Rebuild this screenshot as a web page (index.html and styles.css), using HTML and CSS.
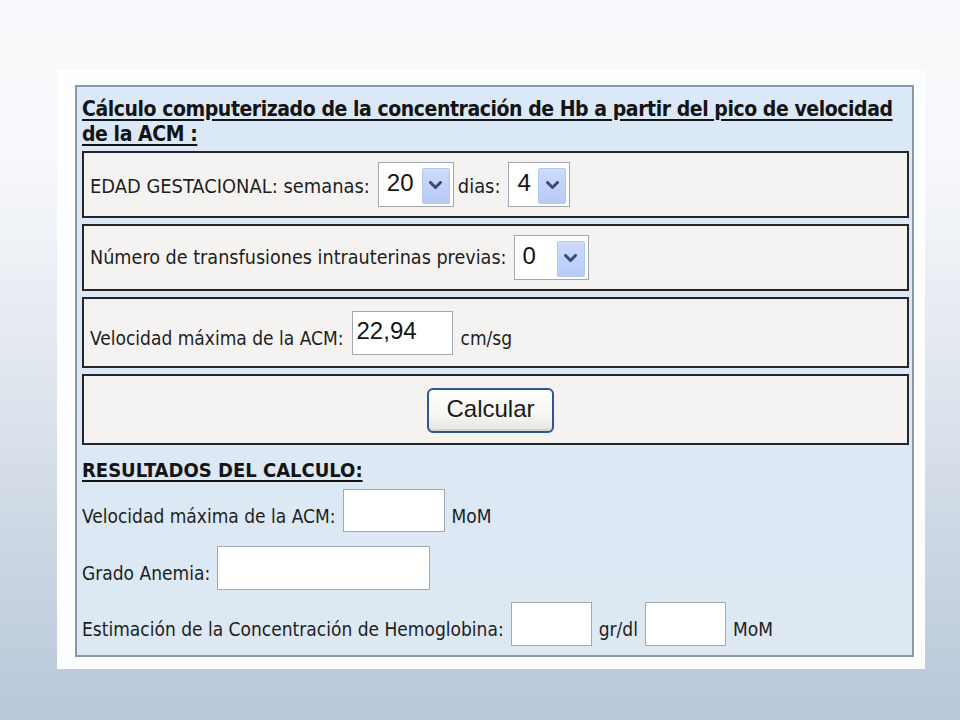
FILE: index.html
```html
<!DOCTYPE html>
<html lang="es">
<head>
<meta charset="utf-8">
<title>Cálculo Hb</title>
<link rel="stylesheet" href="styles.css">
</head>
<body>
<div class="slide">
  <div class="panel">
    <div class="title">Cálculo computerizado de la concentración de Hb a partir del pico de velocidad<br>de la ACM :</div>

    <div class="box box-short">
      <span class="lbl lbl-first">EDAD GESTACIONAL: semanas:</span>
      <div class="sel sel-sem"><span class="val">20</span><span class="arr"><svg width="13" height="9" viewBox="0 0 13 9"><polyline points="1.5,1.5 6.5,6.5 11.5,1.5" fill="none" stroke="#324d7e" stroke-width="3" stroke-linecap="round" stroke-linejoin="round"/></svg></span></div>
      <span class="lbl lbl-first lbl-dias">dias:</span>
      <div class="sel sel-dias"><span class="val">4</span><span class="arr"><svg width="13" height="9" viewBox="0 0 13 9"><polyline points="1.5,1.5 6.5,6.5 11.5,1.5" fill="none" stroke="#324d7e" stroke-width="3" stroke-linecap="round" stroke-linejoin="round"/></svg></span></div>
    </div>

    <div class="box box-short">
      <span class="lbl lbl-wide">Número de transfusiones intrauterinas previas:</span>
      <div class="sel sel-tr"><span class="val">0</span><span class="arr"><svg width="13" height="9" viewBox="0 0 13 9"><polyline points="1.5,1.5 6.5,6.5 11.5,1.5" fill="none" stroke="#324d7e" stroke-width="3" stroke-linecap="round" stroke-linejoin="round"/></svg></span></div>
    </div>

    <div class="box box-tall">
      <span class="lbl lbl-low">Velocidad máxima de la ACM:</span>
      <div class="field field-vel"><span class="val">22,94</span></div>
      <span class="lbl lbl-low">cm/sg</span>
    </div>

    <div class="box box-tall box-center">
      <div class="btn">Calcular</div>
    </div>

    <div class="results">
      <div class="res-title">RESULTADOS DEL CALCULO:</div>
      <div class="res-row res-row-1">
        <span class="lbl lbl-low">Velocidad máxima de la ACM:</span>
        <div class="out out-mom"></div>
        <span class="lbl lbl-low">MoM</span>
      </div>
      <div class="res-row res-row-2">
        <span class="lbl lbl-low">Grado Anemia:</span>
        <div class="out out-grado"></div>
      </div>
      <div class="res-row res-row-3">
        <span class="lbl lbl-low">Estimación de la Concentración de Hemoglobina:</span>
        <div class="out out-small"></div>
        <span class="lbl lbl-low">gr/dl</span>
        <div class="out out-small"></div>
        <span class="lbl lbl-low">MoM</span>
      </div>
    </div>
  </div>
</div>
</body>
</html>
```

FILE: styles.css
```css
html, body {
  margin: 0;
  padding: 0;
}
body {
  width: 960px;
  height: 720px;
  overflow: hidden;
  background: linear-gradient(to bottom, #f9fafc 0%, #f7f8fb 22%, #e4e9f0 48%, #cfd9e5 72%, #b8c7d9 100%);
  font-family: "DejaVu Sans Condensed", "DejaVu Sans", sans-serif;
  color: #1e1e1e;
}
.slide {
  margin: 70px 0 0 57px;
  width: 868px;
  height: 599px;
  background: #fdfefe;
  padding: 15px 0 0 18px;
  box-sizing: border-box;
}
.panel {
  width: 839px;
  height: 572px;
  box-sizing: border-box;
  border: 2px solid #8898ab;
  background: linear-gradient(to bottom, #dae8f8 0%, #dce8f5 60%, #dde8f2 100%);
  padding: 0 3px 0 5px;
  display: flex;
  flex-direction: column;
}
.title {
  font-weight: bold;
  font-size: 21px;
  letter-spacing: -0.44px;
  line-height: 25px;
  padding-top: 10px;
  text-decoration: underline;
  text-decoration-thickness: 2px;
  text-underline-offset: 3px;
  white-space: nowrap;
  color: #141414;
  margin-bottom: 4px;
}
.box {
  width: 827px;
  box-sizing: border-box;
  border: 2px solid #262626;
  background: #f4f3f2;
  display: flex;
  align-items: center;
  padding-left: 6px;
  margin-bottom: 6px;
  gap: 8px;
}
.box-short { height: 67px; }
.box-tall { height: 71px; }
.box-center {
  justify-content: center;
  padding-left: 0;
  padding-right: 10px;
}
.lbl {
  font-size: 19px;
  line-height: 22px;
  white-space: nowrap;
  color: #1e1e1e;
}
.lbl-first {
  font-size: 19.9px;
  position: relative;
  top: 2px;
}
.lbl-wide { font-size: 19.6px; }
.lbl-low {
  position: relative;
  top: 5px;
}
.lbl-dias { margin-left: -4px; }
.val {
  font-family: "Liberation Sans", Arial, sans-serif;
  font-size: 24px;
  line-height: 26px;
  color: #141414;
  padding-left: 8px;
  padding-bottom: 4px;
}
.sel {
  height: 45px;
  box-sizing: border-box;
  border: 1px solid #a1a8b0;
  background: #ffffff;
  display: flex;
  align-items: center;
  justify-content: space-between;
  padding: 2px 3px 2px 0;
}
.sel-sem { width: 76px; }
.sel-dias { width: 62px; margin-left: 0; }
.sel-tr { width: 75px; margin-left: -1px; }
.arr {
  width: 28px;
  height: 36px;
  box-sizing: border-box;
  border-radius: 2px;
  border: 1px solid #b4c7ee;
  background: linear-gradient(to bottom, #cddbfb 0%, #c1d2f8 55%, #b8cbf5 100%);
  display: flex;
  align-items: center;
  justify-content: center;
  margin-top: 2px;
}
.field {
  width: 101px;
  height: 44px;
  box-sizing: border-box;
  border: 1px solid #a1a8b0;
  background: #ffffff;
  display: flex;
  align-items: center;
}
.field .val { padding-left: 4px; }
.btn {
  width: 127px;
  height: 45px;
  box-sizing: border-box;
  border: 2px solid #2f5599;
  border-radius: 6px;
  background: linear-gradient(to bottom, #ffffff 0%, #f6f6f3 60%, #e6e5de 100%);
  box-shadow: inset 0 -2px 0 #d2d4d0, inset 0 1px 0 #ffffff;
  font-family: "Liberation Sans", Arial, sans-serif;
  font-size: 24px;
  line-height: 26px;
  color: #1a1a1a;
  display: flex;
  align-items: center;
  justify-content: center;
  padding-bottom: 2px;
  margin-top: 1px;
}
.results {
  display: flex;
  flex-direction: column;
}
.res-title {
  font-weight: bold;
  font-size: 20px;
  line-height: 22px;
  margin-top: 8px;
  text-decoration: underline;
  text-decoration-thickness: 2px;
  text-underline-offset: 3px;
  color: #141414;
  white-space: nowrap;
}
.res-row {
  display: flex;
  align-items: center;
  gap: 7px;
}
.res-row-1 { margin-top: 8px; }
.res-row-2 { margin-top: 14px; }
.res-row-3 { margin-top: 12px; }
.out {
  height: 44px;
  box-sizing: border-box;
  border: 1px solid #a1a8b0;
  background: #ffffff;
}
.out-mom { width: 102px; height: 43px; }
.out-grado { width: 213px; }
.out-small { width: 81px; }
```
